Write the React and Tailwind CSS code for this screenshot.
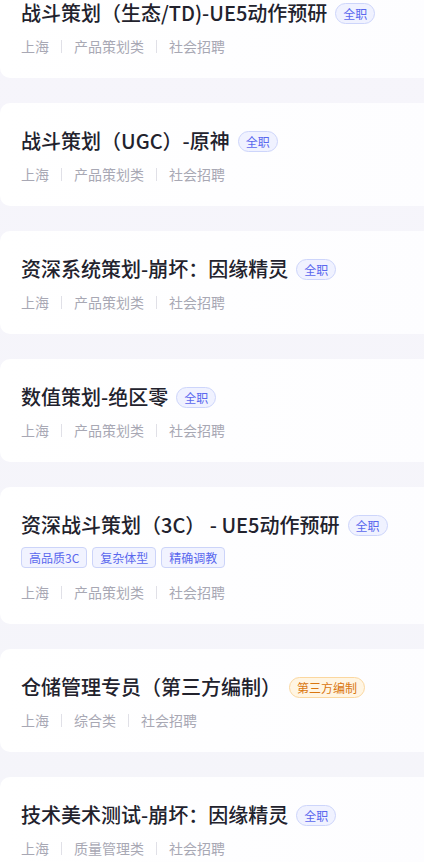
import React from "react";

const jobs = [
  { title: "战斗策划（生态/TD)-UE5动作预研", category: "产品策划类" },
  { title: "战斗策划（UGC）-原神", category: "产品策划类" },
  { title: "资深系统策划-崩坏：因缘精灵", category: "产品策划类" },
  { title: "数值策划-绝区零", category: "产品策划类" },
  {
    title: "资深战斗策划（3C） - UE5动作预研",
    category: "产品策划类",
    tags: ["高品质3C", "复杂体型", "精确调教"],
  },
  { title: "仓储管理专员（第三方编制）", category: "综合类", badge: "第三方编制", orange: true },
  { title: "技术美术测试-崩坏：因缘精灵", category: "质量管理类" },
];

function Badge({ text, orange }) {
  return (
    <span
      className={
        orange
          ? "ml-2 shrink-0 rounded-full border border-[#fbd79f] bg-[#fff5e3] px-[7px] text-[12px] leading-[19px] text-[#d9760f]"
          : "ml-2 shrink-0 rounded-full border border-[#cdd5fb] bg-[#f0f2ff] px-[7px] text-[12px] leading-[19px] text-[#5a68ee]"
      }
    >
      {text}
    </span>
  );
}

function JobCard({ job }) {
  return (
    <div className="w-[440px] rounded-l-[10px] bg-gradient-to-r from-white to-[#fdfdff] pt-[24px] pb-[22px] pl-[21px]">
      <div className="flex items-center">
        <span className="whitespace-nowrap text-[20px] font-medium leading-[28px] text-[#22222d]">{job.title}</span>
        <Badge text={job.badge || "全职"} orange={job.orange} />
      </div>
      {job.tags && (
        <div className="mt-[8px] flex gap-[5px]">
          {job.tags.map((t) => (
            <span
              key={t}
              className="rounded-[4px] border border-[#ccd4f9] bg-[#f1f3ff] px-[7px] text-[12px] leading-[19px] text-[#5a68ee]"
            >
              {t}
            </span>
          ))}
        </div>
      )}
      <div
        className={
          (job.tags ? "mt-[14px]" : "mt-[9px]") +
          " flex items-center text-[14px] leading-[20px] text-[#a8a8b4]"
        }
      >
        <span>上海</span>
        <span className="mx-[12px] h-[13px] w-px bg-[#e0e0e7]" />
        <span>{job.category}</span>
        <span className="mx-[12px] h-[13px] w-px bg-[#e0e0e7]" />
        <span>社会招聘</span>
      </div>
    </div>
  );
}

export default function App() {
  return (
    <div
      className="h-[862px] w-[424px] overflow-hidden bg-gradient-to-b from-[#f6f5fb] to-[#f5f5fa]"
      style={{ fontFamily: '"Noto Sans CJK SC", "Noto Sans", sans-serif' }}
    >
      <div className="-mt-[25px] flex flex-col gap-[25px]">
        {jobs.map((job, i) => (
          <JobCard key={i} job={job} />
        ))}
      </div>
    </div>
  );
}
